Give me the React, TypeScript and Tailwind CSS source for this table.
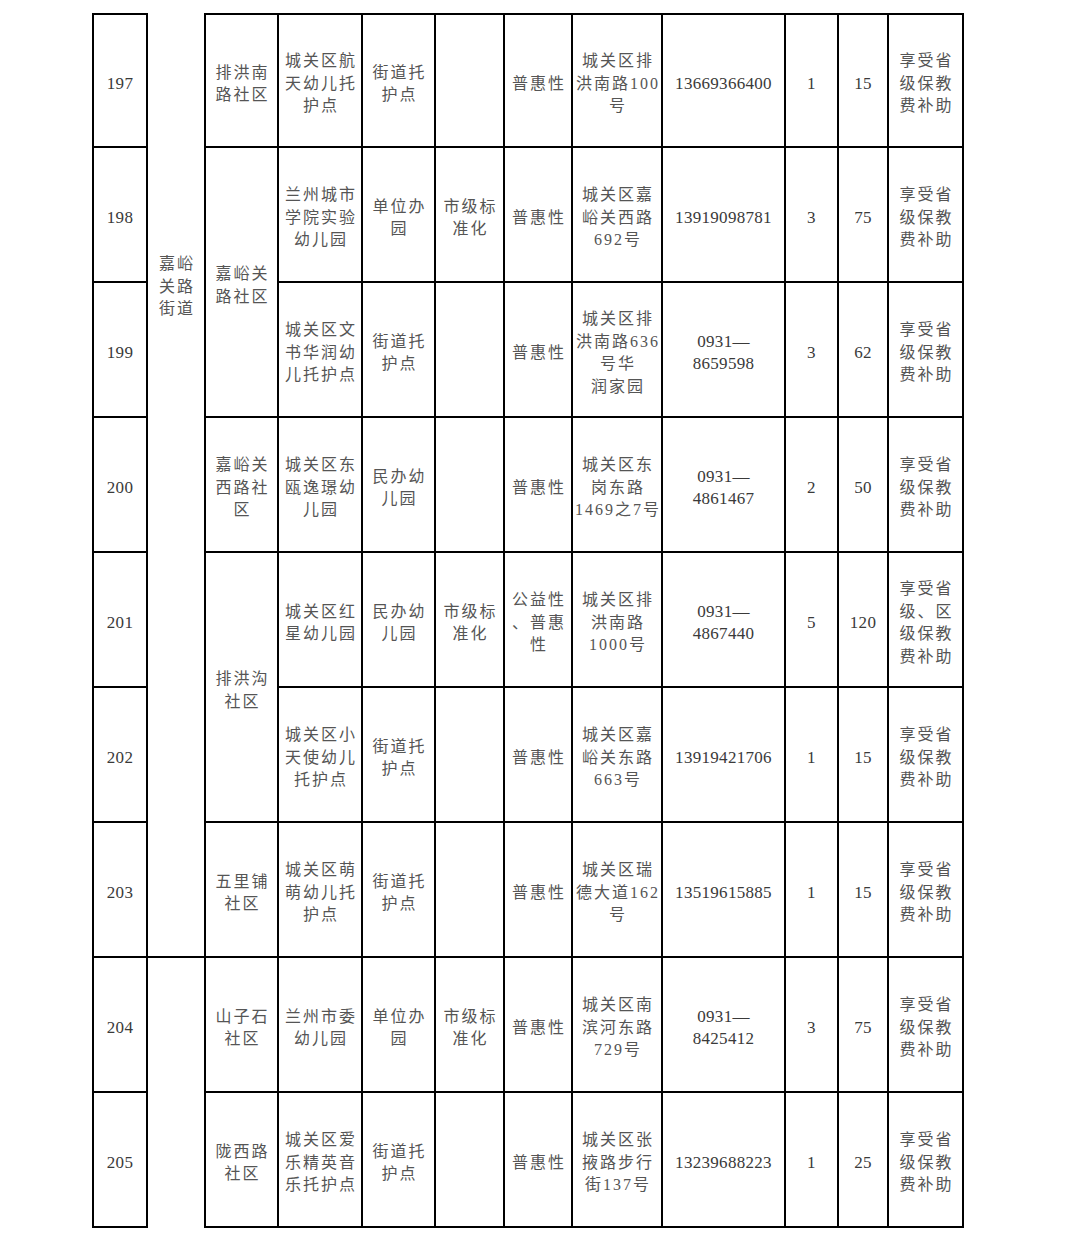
import React from 'react'

type Row = {
  no: string
  comm?: { lines: string[]; span: string }
  name: string[]
  type: string[]
  level: string[]
  nature: string[]
  addr: string[]
  phone: string[]
  cls: string
  kids: string
  remark: string[]
}

const REMARK = ['享受省', '级保教', '费补助']

const rows: Row[] = [
  {
    no: '197',
    comm: { lines: ['排洪南', '路社区'], span: '' },
    name: ['城关区航', '天幼儿托', '护点'],
    type: ['街道托', '护点'],
    level: [],
    nature: ['普惠性'],
    addr: ['城关区排', '洪南路100', '号'],
    phone: ['13669366400'],
    cls: '1',
    kids: '15',
    remark: REMARK,
  },
  {
    no: '198',
    comm: { lines: ['嘉峪关', '路社区'], span: 'row-span-2' },
    name: ['兰州城市', '学院实验', '幼儿园'],
    type: ['单位办', '园'],
    level: ['市级标', '准化'],
    nature: ['普惠性'],
    addr: ['城关区嘉', '峪关西路', '692号'],
    phone: ['13919098781'],
    cls: '3',
    kids: '75',
    remark: REMARK,
  },
  {
    no: '199',
    name: ['城关区文', '书华润幼', '儿托护点'],
    type: ['街道托', '护点'],
    level: [],
    nature: ['普惠性'],
    addr: ['城关区排', '洪南路636', '号华', '润家园'],
    phone: ['0931—', '8659598'],
    cls: '3',
    kids: '62',
    remark: REMARK,
  },
  {
    no: '200',
    comm: { lines: ['嘉峪关', '西路社', '区'], span: '' },
    name: ['城关区东', '瓯逸璟幼', '儿园'],
    type: ['民办幼', '儿园'],
    level: [],
    nature: ['普惠性'],
    addr: ['城关区东', '岗东路', '1469之7号'],
    phone: ['0931—', '4861467'],
    cls: '2',
    kids: '50',
    remark: REMARK,
  },
  {
    no: '201',
    comm: { lines: ['排洪沟', '社区'], span: 'row-span-2' },
    name: ['城关区红', '星幼儿园'],
    type: ['民办幼', '儿园'],
    level: ['市级标', '准化'],
    nature: ['公益性', '、普惠', '性'],
    addr: ['城关区排', '洪南路', '1000号'],
    phone: ['0931—', '4867440'],
    cls: '5',
    kids: '120',
    remark: ['享受省', '级、区', '级保教', '费补助'],
  },
  {
    no: '202',
    name: ['城关区小', '天使幼儿', '托护点'],
    type: ['街道托', '护点'],
    level: [],
    nature: ['普惠性'],
    addr: ['城关区嘉', '峪关东路', '663号'],
    phone: ['13919421706'],
    cls: '1',
    kids: '15',
    remark: REMARK,
  },
  {
    no: '203',
    comm: { lines: ['五里铺', '社区'], span: '' },
    name: ['城关区萌', '萌幼儿托', '护点'],
    type: ['街道托', '护点'],
    level: [],
    nature: ['普惠性'],
    addr: ['城关区瑞', '德大道162', '号'],
    phone: ['13519615885'],
    cls: '1',
    kids: '15',
    remark: REMARK,
  },
  {
    no: '204',
    comm: { lines: ['山子石', '社区'], span: '' },
    name: ['兰州市委', '幼儿园'],
    type: ['单位办', '园'],
    level: ['市级标', '准化'],
    nature: ['普惠性'],
    addr: ['城关区南', '滨河东路', '729号'],
    phone: ['0931—', '8425412'],
    cls: '3',
    kids: '75',
    remark: REMARK,
  },
  {
    no: '205',
    comm: { lines: ['陇西路', '社区'], span: '' },
    name: ['城关区爱', '乐精英音', '乐托护点'],
    type: ['街道托', '护点'],
    level: [],
    nature: ['普惠性'],
    addr: ['城关区张', '掖路步行', '街137号'],
    phone: ['13239688223'],
    cls: '1',
    kids: '25',
    remark: REMARK,
  },
]

const base = 'border-r-2 border-b-2 border-black flex flex-col items-center justify-center text-center pt-[7px]'
const cjk = 'whitespace-nowrap pl-[2px] text-[16px] leading-[22.5px] tracking-[2px] text-[#555]'
const num = 'whitespace-nowrap text-[17px] leading-[22.5px] tracking-[0.3px] text-[#3a3a3a]'

function Cell({ lines, className = '', isNum = false }: { lines: string[]; className?: string; isNum?: boolean }) {
  return (
    <div className={`${base} ${className}`}>
      {lines.map((l, i) => (
        <div key={i} className={isNum ? num : cjk}>
          {l}
        </div>
      ))}
    </div>
  )
}

export default function App() {
  return (
    <main className="min-h-[1238px] bg-white pl-[92px] pt-[13px] font-['Liberation_Serif','Noto_Sans_CJK_SC',serif]">
      <div className="grid w-[872px] grid-cols-[56px_58px_73px_84px_73px_69px_68px_90px_123px_53px_50px_75px] grid-rows-[repeat(9,135px)]">
        {rows.flatMap((r, i) => {
          const top = i === 0 ? 'border-t-2' : ''
          const cells = [<Cell key={`no${i}`} lines={[r.no]} isNum className={`border-l-2 ${top}`} />]
          if (i === 0) {
            cells.push(
              <div key="street1" className="row-span-7 flex flex-col items-center border-r-2 border-b-2 border-black pt-[240px]">
                {['嘉峪', '关路', '街道'].map((l) => (
                  <div key={l} className={cjk}>
                    {l}
                  </div>
                ))}
              </div>,
            )
          }
          if (i === 7) {
            cells.push(<div key="street2" className="row-span-2 border-r-2 border-black" />)
          }
          if (r.comm) {
            cells.push(<Cell key={`cm${i}`} lines={r.comm.lines} className={`${r.comm.span} ${top}`} />)
          }
          cells.push(
            <Cell key={`nm${i}`} lines={r.name} className={top} />,
            <Cell key={`ty${i}`} lines={r.type} className={top} />,
            <Cell key={`lv${i}`} lines={r.level} className={top} />,
            <Cell key={`na${i}`} lines={r.nature} className={top} />,
            <Cell key={`ad${i}`} lines={r.addr} className={top} />,
            <Cell key={`ph${i}`} lines={r.phone} isNum className={top} />,
            <Cell key={`cl${i}`} lines={[r.cls]} isNum className={top} />,
            <Cell key={`kd${i}`} lines={[r.kids]} isNum className={top} />,
            <Cell key={`rm${i}`} lines={r.remark} className={top} />,
          )
          return cells
        })}
      </div>
    </main>
  )
}
